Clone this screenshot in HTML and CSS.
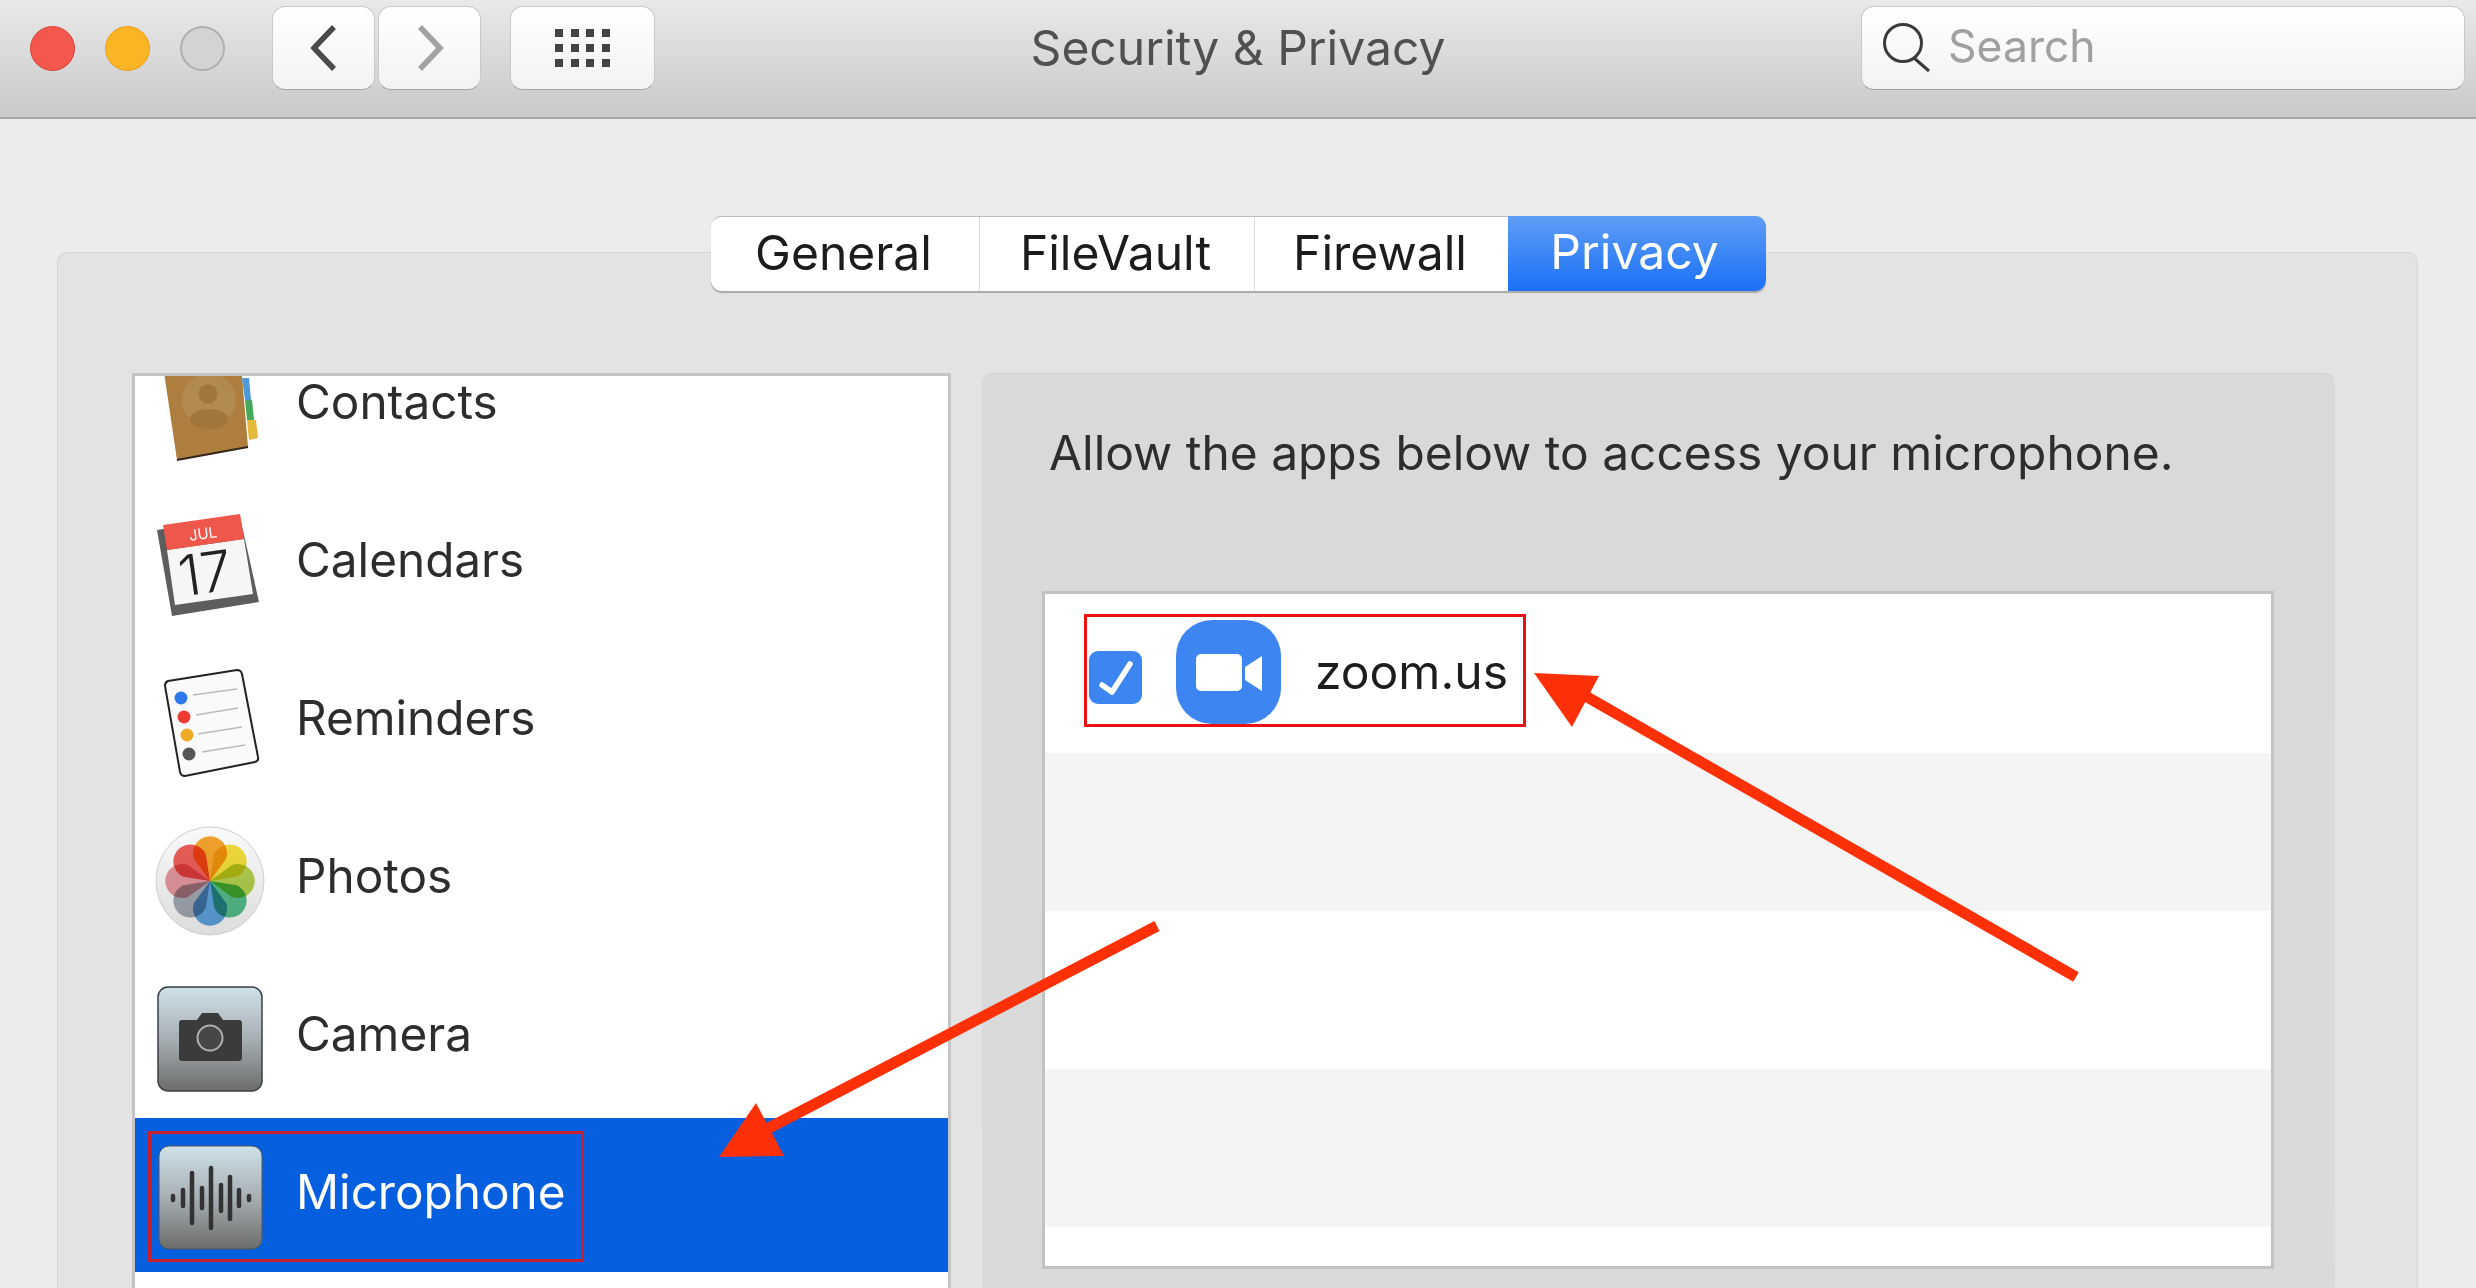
FILE: index.html
```html
<!DOCTYPE html>
<html lang="en">
<head>
<meta charset="utf-8">
<title>Security &amp; Privacy</title>
<link rel="stylesheet" href="styles.css">
</head>
<body>
<div class="window">
  <header class="titlebar">
    <div class="toolbar-left">
      <div class="lights">
        <span class="light red"></span>
        <span class="light yellow"></span>
        <span class="light gray"></span>
      </div>
      <div class="nav">
        <button class="btn nav-btn"><svg width="30" height="48" viewBox="0 0 30 48"><path class="chev dark" d="M25 3 L5 24 L25 45"/></svg></button>
        <button class="btn nav-btn"><svg width="30" height="48" viewBox="0 0 30 48"><path class="chev light-chev" d="M5 3 L25 24 L5 45"/></svg></button>
      </div>
      <button class="btn grid-btn">
        <span class="dots">
          <i></i><i></i><i></i><i></i><i></i><i></i><i></i><i></i><i></i><i></i><i></i><i></i>
        </span>
      </button>
    </div>
    <h1 class="title">Security &amp; Privacy</h1>
    <div class="search">
      <svg width="50" height="50" viewBox="0 0 50 50"><circle cx="21" cy="20" r="18.5" class="mag"/><path class="mag" d="M32 35 L47 48"/></svg>
      <span class="search-text">Search</span>
    </div>
  </header>

  <main class="content">
    <nav class="tabs">
      <span class="tab t1">General</span>
      <span class="tab t2">FileVault</span>
      <span class="tab t3">Firewall</span>
      <span class="tab t4 active">Privacy</span>
    </nav>
    <section class="panel">
      <div class="list">
        <div class="row contacts">
          <svg class="icon" viewBox="0 0 110 110">
            <polygon points="6,0 22,108 93,95 85,0" fill="#ad7e3d"/>
            <path d="M22 108 L93 95" stroke="#33261a" stroke-width="2"/>
            <circle cx="54" cy="48" r="27" fill="#b18a4f"/>
            <circle cx="53" cy="42" r="9.500" fill="#a0763a"/>
            <ellipse cx="54" cy="67" rx="19" ry="10" fill="#a0763a"/>
            <polygon points="87,26 94,26 96,48 90,48" fill="#4d9bd6"/>
            <polygon points="90,48 97,48 99,68 92,68" fill="#45a85a"/>
            <polygon points="92,68 101,68 103,86 94,88" fill="#e7b93a"/>
          </svg>
          <span class="label">Contacts</span>
        </div>
        <div class="row">
          <svg class="icon" viewBox="0 0 110 110">
            <polygon points="2,20 85,7 104,92 17,106" fill="#5d5d5d"/>
            <polygon points="12,40 89,29 98,84 20,95" fill="#f6f6f6"/>
            <polygon points="8,15 85,4 89,29 12,40" fill="#f0574b"/>
            <text class="cal-month" x="48" y="29" transform="rotate(-8 48 24)">JUL</text>
            <text class="cal-day" x="50" y="83" transform="rotate(-8 50 62)">17</text>
          </svg>
          <span class="label">Calendars</span>
        </div>
        <div class="row">
          <svg class="icon" viewBox="0 0 110 110">
            <path d="M13 13 L82 2 Q86 2 87 6 L103 89 Q104 93 100 94 L30 108 Q26 108 25 104 L10 18 Q10 14 13 13 Z" fill="#fafafa" stroke="#222" stroke-width="2"/>
            <circle cx="26" cy="30" r="6.500" fill="#2e79ee"/>
            <circle cx="29" cy="49" r="6.500" fill="#ee3a33"/>
            <circle cx="32" cy="67" r="6.500" fill="#f0aa2a"/>
            <circle cx="34" cy="86" r="6.500" fill="#555"/>
            <path class="rem-line" d="M38 27 L82 21 M41 47 L83 40 M43 66 L87 59 M47 84 L90 77"/>
          </svg>
          <span class="label">Reminders</span>
        </div>
        <div class="row">
          <svg class="icon" viewBox="0 0 110 110">
            <defs>
              <linearGradient id="disc" x1="0" y1="0" x2="0" y2="1"><stop offset="0" stop-color="#fafafa"/><stop offset="1" stop-color="#dcdcdc"/></linearGradient>
              <linearGradient id="tile" x1="0" y1="0" x2="0" y2="1"><stop offset="0" stop-color="#cfe1ea"/><stop offset=".5" stop-color="#a7afb2"/><stop offset="1" stop-color="#6c6c6c"/></linearGradient>
            </defs>
            <circle cx="55" cy="55" r="54" fill="url(#disc)" stroke="#cfcfcf"/>
            <g transform="translate(55 55)">
              <path class="petal" fill="#f7a52c" d="M0 0 L-16 -22 A17 17 0 1 1 16 -22 Z"/>
              <path class="petal" fill="#f6df3c" transform="rotate(45)" d="M0 0 L-16 -22 A17 17 0 1 1 16 -22 Z"/>
              <path class="petal" fill="#b5d34f" transform="rotate(90)" d="M0 0 L-16 -22 A17 17 0 1 1 16 -22 Z"/>
              <path class="petal" fill="#57c08d" transform="rotate(135)" d="M0 0 L-16 -22 A17 17 0 1 1 16 -22 Z"/>
              <path class="petal" fill="#5fa6e3" transform="rotate(180)" d="M0 0 L-16 -22 A17 17 0 1 1 16 -22 Z"/>
              <path class="petal" fill="#a4acb5" transform="rotate(225)" d="M0 0 L-16 -22 A17 17 0 1 1 16 -22 Z"/>
              <path class="petal" fill="#e89aa0" transform="rotate(270)" d="M0 0 L-16 -22 A17 17 0 1 1 16 -22 Z"/>
              <path class="petal" fill="#f0605a" transform="rotate(315)" d="M0 0 L-16 -22 A17 17 0 1 1 16 -22 Z"/>
            </g>
          </svg>
          <span class="label">Photos</span>
        </div>
        <div class="row">
          <svg class="icon" viewBox="0 0 110 110">
            <rect x="3" y="3" width="104" height="104" rx="10" fill="url(#tile)" stroke="#3a3f46" stroke-width="1.500"/>
            <path d="M24 39 Q24 36 27 36 H42 L47 29 H63 L68 36 H84 Q87 36 87 39 V74 Q87 77 84 77 H27 Q24 77 24 74 Z" fill="#3b3b3b"/>
            <circle cx="55" cy="54" r="12.500" fill="#474747" stroke="#b0b0b0" stroke-width="2"/>
          </svg>
          <span class="label">Camera</span>
        </div>
        <div class="row selected">
          <svg class="icon" viewBox="0 0 110 110">
            <rect x="4" y="6" width="103" height="103" rx="10" fill="url(#tile)" stroke="#555" stroke-width="1"/>
            <path class="wave" d="M18 56v4 M28 50v16 M37 33v50 M47 48v20 M56 28v60 M66 45v26 M75 37v42 M84 50v16 M94 56v4"/>
          </svg>
          <span class="label">Microphone</span>
        </div>
      </div>
      <div class="detail">
        <p class="prompt">Allow the apps below to access your microphone.</p>
        <div class="apps">
          <div class="app-row first">
            <span class="check"><svg width="53" height="53" viewBox="0 0 53 53"><path d="M13 34 L23 41 L41 13" class="tick"/></svg></span>
            <svg class="zoom-icon" width="105" height="104" viewBox="0 0 105 104">
              <rect width="105" height="104" rx="36" fill="#3d85f0"/>
              <rect x="20" y="34" width="46" height="37" rx="5" fill="#fff"/>
              <polygon points="69,47 86,36 86,71 69,60" fill="#fff"/>
            </svg>
            <span class="app-name">zoom.us</span>
          </div>
          <div class="app-row band"></div>
          <div class="app-row"></div>
          <div class="app-row band"></div>
        </div>
      </div>
    </section>
  </main>

  <svg class="annotations" width="2476" height="1288" viewBox="0 0 2476 1288">
    <rect x="149.500" y="1132.500" width="433" height="128" class="box-dark"/>
    <rect x="1085.500" y="615.500" width="439" height="110" class="box-bright"/>
    <path class="shaft" d="M2076 977 L1575 690"/>
    <polygon class="head" points="1534,673 1599,676 1572,727"/>
    <path class="shaft" d="M1157 926 L765 1130"/>
    <polygon class="head" points="756,1103 719,1157 784,1156"/>
  </svg>
</div>
</body>
</html>
```

FILE: styles.css
```css
* { box-sizing: border-box; }
html, body { margin: 0; padding: 0; }
body { width: 2476px; height: 1288px; overflow: hidden; font-family: Inter, "Liberation Sans", sans-serif; background: #ececec; }
.window { position: relative; width: 2476px; height: 1288px; overflow: hidden; display: flex; flex-direction: column; }

.titlebar { height: 119px; flex: none; display: grid; grid-template-columns: 1fr auto 1fr; align-items: start; padding: 6px 11px 0; background: linear-gradient(#e9e9e9, #c9c9c9); border-bottom: 2px solid #a8a8a8; }
.toolbar-left { display: flex; align-items: center; margin-left: 19px; }
.lights { display: flex; gap: 30px; margin-right: 47px; }
.light { width: 45px; height: 45px; border-radius: 50%; }
.red { background: #f4574c; border: 1px solid #d8443a; }
.yellow { background: #fbb424; border: 1px solid #e6a31e; }
.gray { background: #d3d3d3; border: 2px solid #b0b0b0; }
.btn { height: 84px; padding: 0; display: flex; align-items: center; justify-content: center; background: linear-gradient(#fff, #f3f3f3); border: 1px solid #c9c9c9; border-bottom-color: #a6a6a6; border-radius: 13px; }
.nav { display: flex; gap: 3px; margin-right: 29px; }
.nav-btn { width: 103px; }
.grid-btn { width: 145px; }
.chev { fill: none; stroke-width: 5.500; }
.dark { stroke: #4a4a4a; }
.light-chev { stroke: #a2a2a2; }
.dots { display: grid; grid-template-columns: repeat(4, 8px); grid-auto-rows: 8px; gap: 7px 7.500px; }
.dots i { background: #444; }
.title { margin: 0; align-self: center; font-size: 48px; font-weight: 400; color: #505050; line-height: 1; padding-bottom: 28px; }
.search { justify-self: end; width: 604px; height: 84px; display: flex; align-items: center; gap: 16px; padding-left: 20px; background: linear-gradient(#fff, #f3f3f3); border: 1px solid #c9c9c9; border-bottom-color: #a0a0a0; border-radius: 13px; }
.mag { fill: none; stroke: #3a3a3a; stroke-width: 3; }
.search-text { font-size: 44.500px; color: #a0a0a0; line-height: 1; padding-bottom: 3px; }

.content { flex: 1; min-height: 0; display: flex; flex-direction: column; }
.tabs { position: relative; z-index: 1; align-self: center; margin-top: 97px; display: flex; height: 75px; background: #fff; border-radius: 11px; border-top: 1px solid #bdbdbd; box-shadow: 0 2px 1px #a9a9a9; font-size: 48px; color: #1c1c1c; }
.tab { display: flex; align-items: center; justify-content: center; padding: 0 2px 4px 0; border-right: 1px solid #d9d9d9; }
.t1 { width: 269px; }
.t2 { width: 275px; }
.t3 { width: 253px; border-right: 0; }
.t4 { width: 258px; border-right: 0; padding-right: 4px; }
.active { color: #fff; background: linear-gradient(#5f9df6, #1a70f6); border-radius: 0 11px 11px 0; margin-top: -1px; }
.panel { flex: 1; min-height: 0; margin: -39px 58px 0 57px; padding: 120px 82px 0 74px; display: flex; gap: 31px; background: #e3e3e3; border: 1px solid #d5d5d5; border-bottom: 0; border-radius: 10px 10px 0 0; }
.list { width: 819px; flex: none; height: 940px; background: #fff; border: 3px solid #c4c4c4; border-bottom: 0; overflow: hidden; }
.row { height: 158px; display: flex; align-items: center; gap: 31px; padding-left: 20px; }
.contacts { margin-top: -48px; }
.selected { height: 154px; background: #055fde; color: #fff; }
.icon { width: 110px; height: 110px; flex: none; }
.label { font-size: 47.700px; line-height: 1; color: #2d2d2d; padding-bottom: 8px; }
.selected .label { color: #fff; padding-bottom: 4px; }
.cal-month { font-size: 15px; fill: #fff; text-anchor: middle; }
.cal-day { font-size: 56px; font-weight: 300; fill: #222; text-anchor: middle; }
.rem-line { stroke: #bbb; stroke-width: 1.500; fill: none; }
.petal { mix-blend-mode: multiply; }
.wave { stroke: #333; stroke-width: 4.500; stroke-linecap: round; fill: none; }

.detail { flex: 1; min-width: 0; display: flex; flex-direction: column; padding: 0 60px; background: linear-gradient(#d9d9d9, #dadada); border-radius: 10px 10px 0 0; border-top: 1px solid #cfcfcf; }
.prompt { margin: 0; height: 217px; padding: 54px 0 0 7px; font-size: 47.900px; line-height: 50px; color: #2d2d2d; white-space: nowrap; }
.apps { width: 1232px; height: 678px; margin-left: 0; background: #fff; border: 3px solid #c2c2c2; }
.app-row { height: 158px; display: flex; align-items: center; padding-left: 44px; }
.first { height: 159px; }
.band { background: #f4f4f4; }
.check { width: 53px; height: 53px; flex: none; margin: 8px 34px 0 0; background: #3d85f0; border-radius: 9px; }
.tick { fill: none; stroke: #fff; stroke-width: 5.500; stroke-linecap: round; stroke-linejoin: round; }
.zoom-icon { flex: none; margin: -3px 34px 0 0; }
.app-name { font-size: 48px; color: #1d1d1d; line-height: 1; padding-bottom: 4px; }

.annotations { position: absolute; left: 0; top: 0; z-index: 2; pointer-events: none; }
.box-dark { fill: none; stroke: #c8202c; stroke-width: 3; }
.box-bright { fill: none; stroke: #ea1212; stroke-width: 3; }
.shaft { stroke: #fe3008; stroke-width: 11; fill: none; }
.head { fill: #fe3008; }
```
